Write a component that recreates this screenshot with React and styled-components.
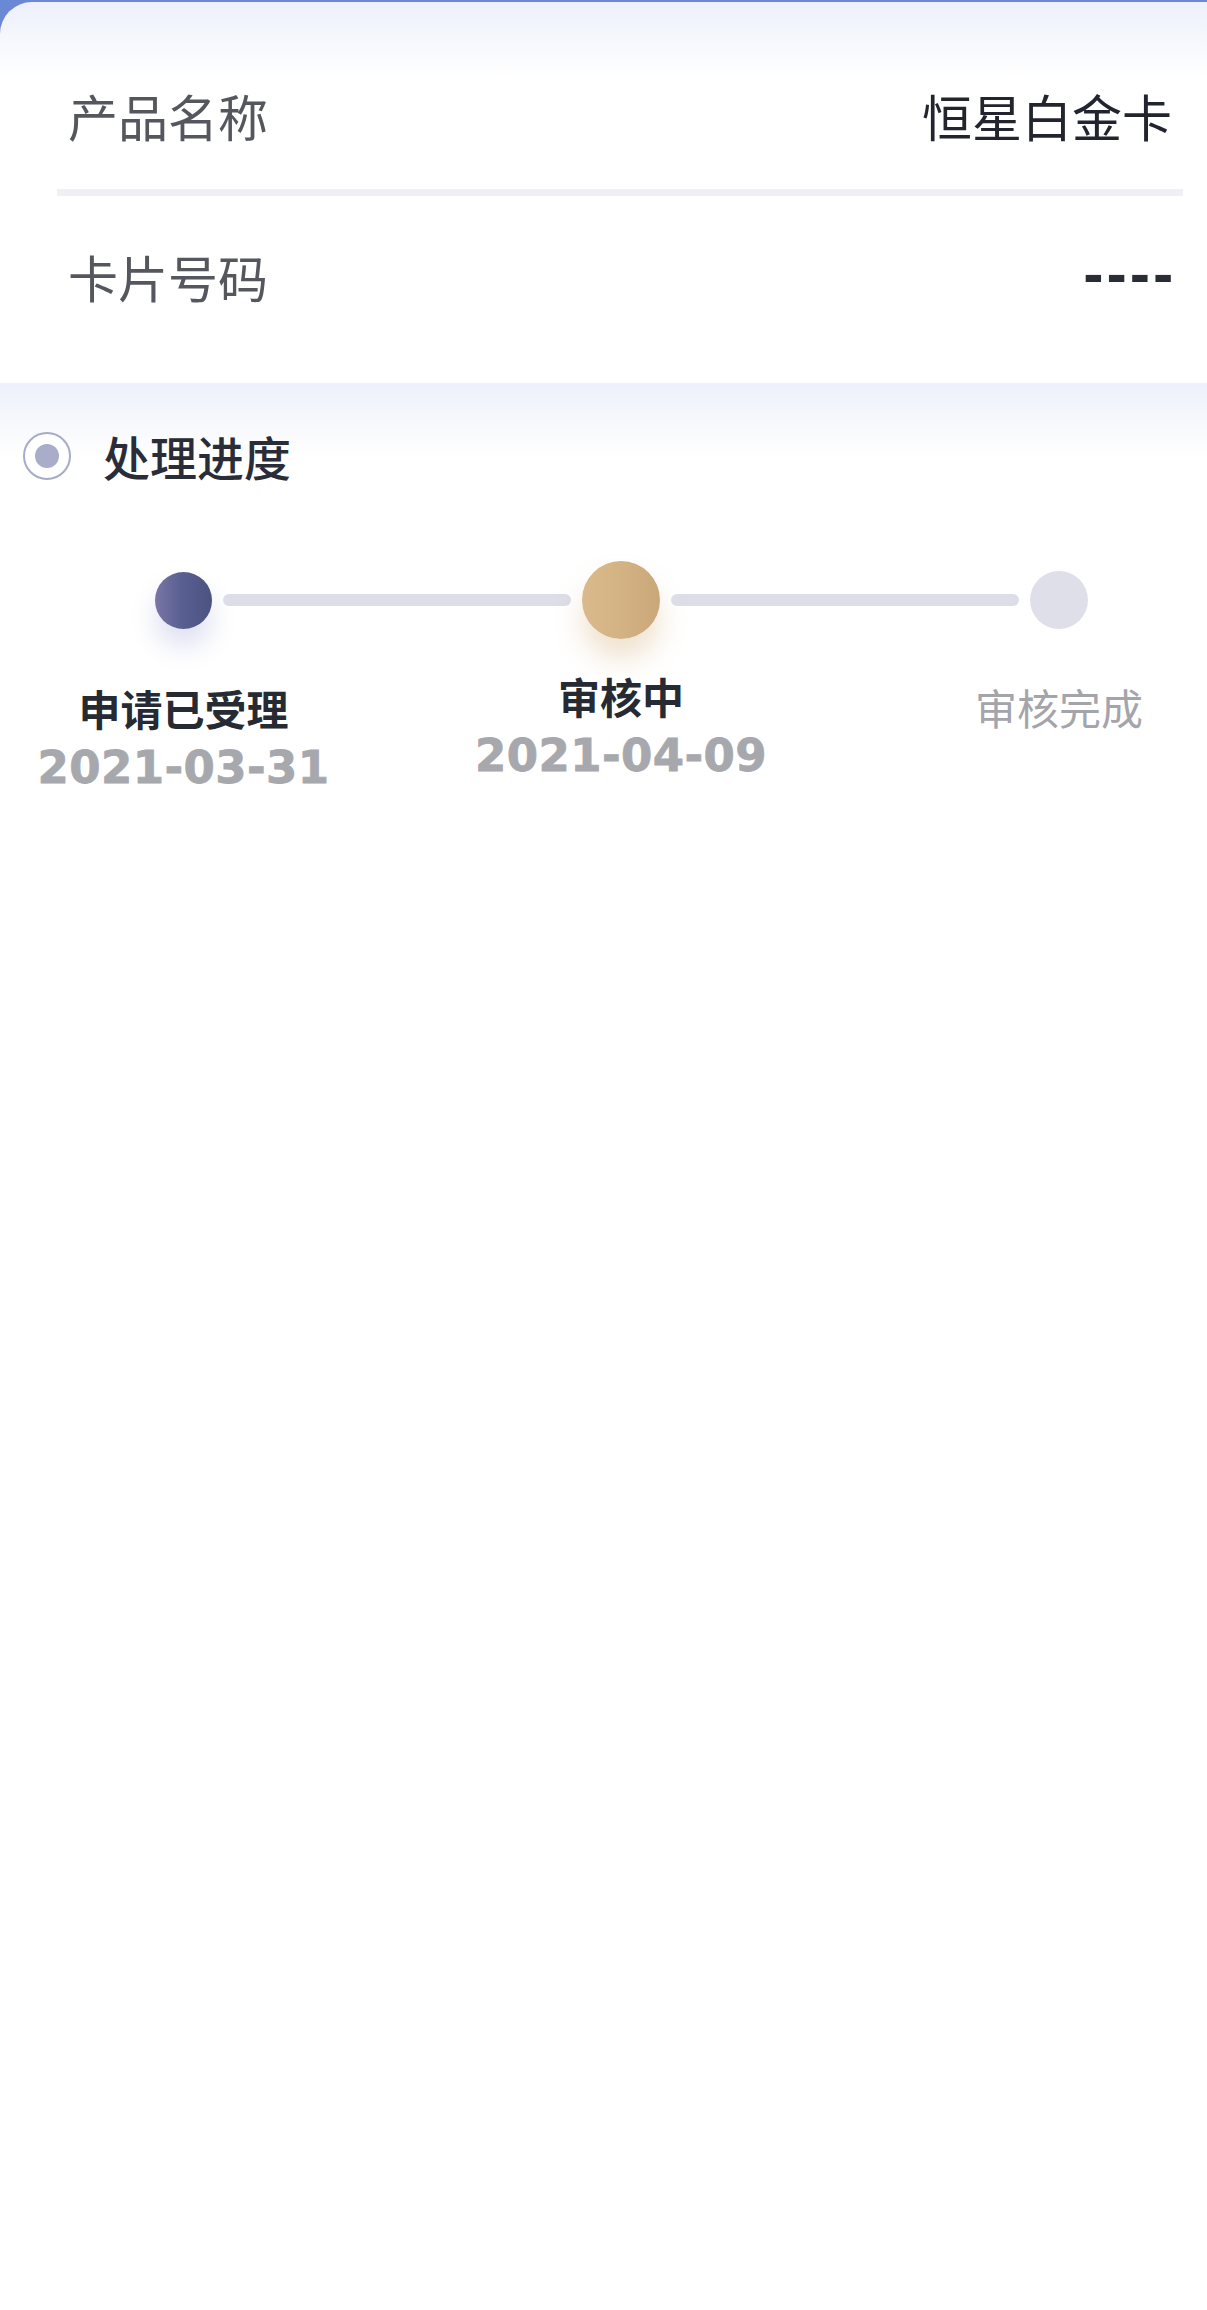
import React from "react";
import styled, { createGlobalStyle } from "styled-components";

const GlobalStyle = createGlobalStyle`
  html, body {
    margin: 0;
    padding: 0;
    background: #ffffff;
  }
  body {
    font-family: "Noto Sans CJK SC", "Noto Sans", sans-serif;
    -webkit-font-smoothing: antialiased;
  }
  * { box-sizing: border-box; }
`;

const Page = styled.div`
  min-height: 2310px;
  background: #ffffff;
`;

const TopFrame = styled.div`
  background: #6b88d4;
  padding-top: 2px;
`;

const InfoCard = styled.section`
  background: linear-gradient(180deg, #edf0fb 0px, #f6f8fd 40px, #ffffff 75px);
  border-top-left-radius: 32px;
  padding: 39px 0 27px 0;
`;

const InfoRow = styled.div`
  display: flex;
  align-items: center;
  justify-content: space-between;
  height: ${(p) => p.$h}px;
  padding: 0 35px 0 68px;
`;

const InfoLabel = styled.span`
  font-size: 50px;
  line-height: 60px;
  color: #55575f;
  font-weight: 400;
`;

const InfoValue = styled.span`
  font-size: 50px;
  line-height: 60px;
  color: #23252e;
  font-weight: 400;
`;

const DashValue = styled.span`
  font-family: "DejaVu Sans", "Liberation Sans", sans-serif;
  font-size: 50px;
  line-height: 60px;
  font-weight: 700;
  color: #2a2c36;
  letter-spacing: 2.5px;
  margin-right: -4px;
`;

const Divider = styled.div`
  height: 7px;
  background: #efeff5;
  margin: 0 24px 0 57px;
`;

const ProgressSection = styled.section`
  background: linear-gradient(180deg, #eef1fb 0px, #f7f8fd 40px, #ffffff 75px);
  padding-top: 40px;
`;

const SectionHeader = styled.div`
  display: flex;
  align-items: center;
  height: 66px;
  padding-left: 23px;
  gap: 32px;
`;

const Radio = styled.span`
  width: 48px;
  height: 48px;
  border-radius: 50%;
  border: 2.5px solid #a7abc9;
  background: #ffffff;
  display: flex;
  align-items: center;
  justify-content: center;
  flex-shrink: 0;
  &::after {
    content: "";
    width: 24px;
    height: 24px;
    border-radius: 50%;
    background: #a9adca;
  }
`;

const SectionTitle = styled.h2`
  margin: 0;
  font-size: 47px;
  line-height: 60px;
  font-weight: 500;
  color: #2a2d37;
`;

const StepsRow = styled.div`
  display: flex;
  align-items: flex-start;
  margin-top: 72px;
  padding: 0 119px 0 155px;
`;

const Step = styled.div`
  display: flex;
  flex-direction: column;
  align-items: center;
  width: ${(p) => p.$size}px;
  flex-shrink: 0;
  padding-top: ${(p) => p.$offset}px;
`;

const Node = styled.div`
  width: ${(p) => p.$size}px;
  height: ${(p) => p.$size}px;
  border-radius: 50%;
  background: ${(p) =>
    p.$state === "done"
      ? "linear-gradient(90deg, #7a76a5 0%, #5a5f92 45%, #4b5380 100%)"
      : p.$state === "active"
      ? "linear-gradient(90deg, #dab98c 0%, #d3b283 50%, #c9a779 100%)"
      : "#dfdfe9"};
  box-shadow: ${(p) =>
    p.$state === "done"
      ? "0 18px 26px rgba(95, 105, 190, 0.2)"
      : p.$state === "active"
      ? "0 20px 28px rgba(205, 160, 95, 0.3)"
      : "none"};
`;

const StepLabel = styled.div`
  margin-top: ${(p) => p.$gap}px;
  white-space: nowrap;
  font-size: 42px;
  line-height: 50px;
  font-weight: ${(p) => (p.$muted ? 400 : 700)};
  color: ${(p) => (p.$muted ? "#a4a5ab" : "#262a33")};
`;

const StepDate = styled.div`
  margin-top: 10px;
  white-space: nowrap;
  font-family: "DejaVu Sans", "Liberation Sans", sans-serif;
  font-weight: 700;
  font-size: 45px;
  line-height: 50px;
  color: #a7a8ad;
  letter-spacing: 0.4px;
  -webkit-text-stroke: 0.8px #a7a8ad;
`;

const Connector = styled.div`
  flex: 1;
  height: 12px;
  border-radius: 6px;
  background: #dcdde6;
  margin: 33px 11px 0 11px;
`;

const steps = [
  { label: "申请已受理", date: "2021-03-31", state: "done", size: 57, offset: 11, gap: 54 },
  { label: "审核中", date: "2021-04-09", state: "active", size: 78, offset: 0, gap: 32 },
  { label: "审核完成", date: null, state: "todo", size: 58, offset: 10, gap: 53 },
];

export default function App() {
  return (
    <Page>
      <GlobalStyle />
      <TopFrame>
        <InfoCard>
          <InfoRow $h={148}>
            <InfoLabel>产品名称</InfoLabel>
            <InfoValue>恒星白金卡</InfoValue>
          </InfoRow>
          <Divider />
          <InfoRow $h={160}>
            <InfoLabel>卡片号码</InfoLabel>
            <DashValue>----</DashValue>
          </InfoRow>
        </InfoCard>
      </TopFrame>
      <ProgressSection>
        <SectionHeader>
          <Radio />
          <SectionTitle>处理进度</SectionTitle>
        </SectionHeader>
        <StepsRow>
          {steps.map((s, i) => (
            <React.Fragment key={s.label}>
              {i > 0 && <Connector />}
              <Step $size={s.size} $offset={s.offset}>
                <Node $size={s.size} $state={s.state} />
                <StepLabel $gap={s.gap} $muted={s.state === "todo"}>
                  {s.label}
                </StepLabel>
                {s.date && <StepDate>{s.date}</StepDate>}
              </Step>
            </React.Fragment>
          ))}
        </StepsRow>
      </ProgressSection>
    </Page>
  );
}
